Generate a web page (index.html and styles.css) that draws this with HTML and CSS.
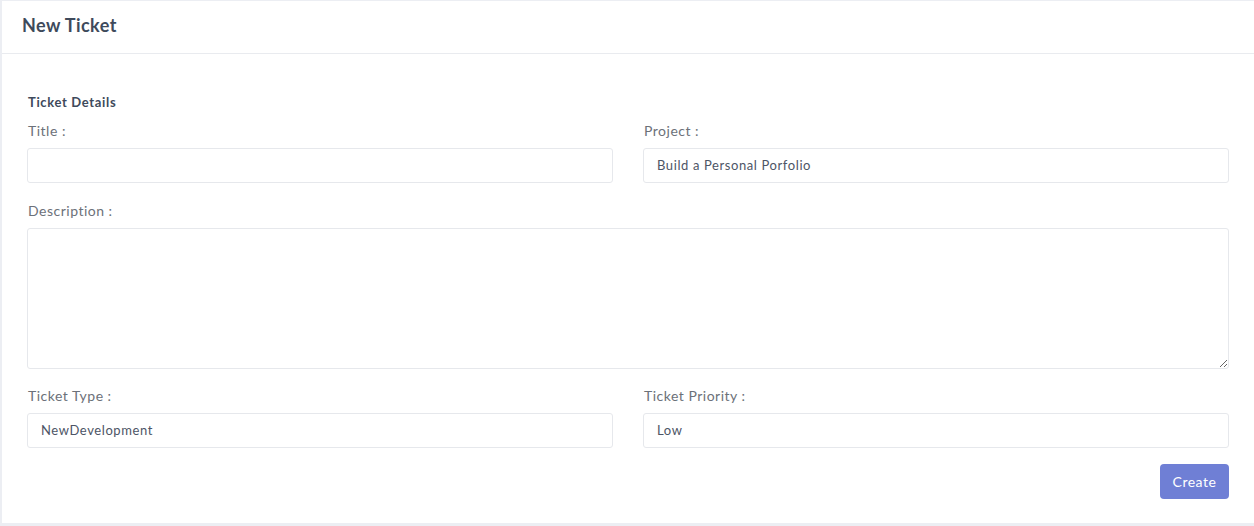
FILE: index.html
```html
<!DOCTYPE html>
<html>
<head>
<meta charset="utf-8">
<link rel="stylesheet" href="styles.css">
</head>
<body>
<div class="page">
  <div class="card">
    <div class="card-header"><h2 class="card-title">New Ticket</h2></div>
    <div class="card-body">
      <h6 class="section-title">Ticket Details</h6>
      <div class="grid">
        <div class="field">
          <label class="label">Title :</label>
          <input class="control" type="text" value="">
        </div>
        <div class="field">
          <label class="label">Project :</label>
          <input class="control" type="text" value="Build a Personal Porfolio">
        </div>
        <div class="field span2">
          <label class="label">Description :</label>
          <textarea class="control area"></textarea>
        </div>
        <div class="field">
          <label class="label">Ticket Type :</label>
          <input class="control" type="text" value="NewDevelopment">
        </div>
        <div class="field">
          <label class="label">Ticket Priority :</label>
          <input class="control" type="text" value="Low">
        </div>
      </div>
      <div class="actions"><button class="btn">Create</button></div>
    </div>
  </div>
</div>
</body>
</html>
```
FILE: styles.css
```css
* { box-sizing: border-box; }
html, body { margin: 0; padding: 0; background: #eceef3; }
body { font-family: Lato, "Noto Sans", sans-serif; }
.page { padding: 1px 0 0 2px; height: 526px; overflow: hidden; }
.card { background: #fff; width: 1253px; height: 522px; }
.card-header { height: 53px; border-bottom: 1px solid #e9ebef; padding: 0 20px; display: flex; align-items: center; }
.card-title { margin: 0; font-size: 18px; font-weight: 700; color: #3e4a5b; line-height: 24px; padding-bottom: 4px; letter-spacing: 0.45px; }
.card-body { padding: 38px 26px 0 25px; }
.section-title { margin: 0 0 9px 1px; font-size: 13px; font-weight: 700; color: #3e4a5b; line-height: 20px; letter-spacing: 0.65px; }
.grid { display: grid; grid-template-columns: 1fr 1fr; column-gap: 30px; row-gap: 18px; }
.span2 { grid-column: 1 / 3; }
.field { display: flex; flex-direction: column; }
.label { font-size: 14px; line-height: 20px; color: #6c7179; margin: 0 0 7px 1px; letter-spacing: 0.5px; }
.control { height: 35px; border: 1px solid #e6e8ec; border-radius: 3px; padding: 0 13px 2px; font-family: inherit; font-size: 13px; color: #4d5566; background: #fff; outline: none; width: 100%; margin: 0; letter-spacing: 0.6px; }
.area { height: 141px; resize: vertical; display: block; }
.grid .field:nth-child(4), .grid .field:nth-child(5) { margin-top: -1px; }
.actions { display: flex; justify-content: flex-end; margin-top: 16px; }
.btn { width: 69px; height: 35px; border: none; border-radius: 4px; background: #6f7fd5; color: #fff; font-family: inherit; font-size: 14px; padding: 0; letter-spacing: 0.5px; }
```
